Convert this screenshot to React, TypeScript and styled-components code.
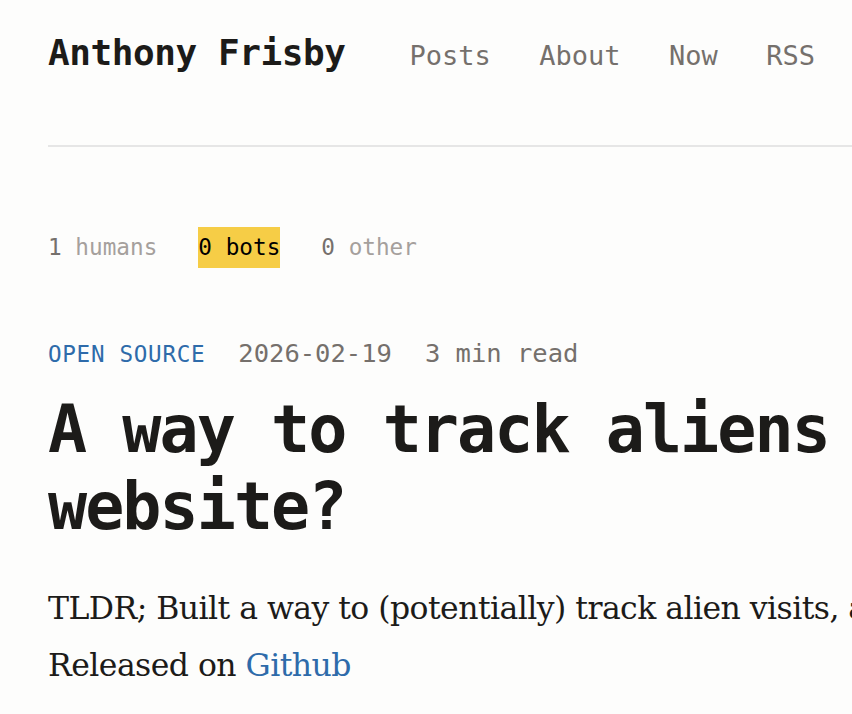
import React from 'react';
import styled, { createGlobalStyle } from 'styled-components';

const MONO = '"DejaVu Sans Mono", "Liberation Mono", monospace';
const SERIF = '"DejaVu Serif", "Liberation Serif", serif';

const colors = {
  bg: '#fdfdfc',
  ink: '#1c1b19',
  muted: '#75706c',
  faint: '#a5a09c',
  rule: '#e6e6e6',
  blue: '#2e6baa',
  highlight: '#f6cd46',
};

const GlobalStyle = createGlobalStyle`
  html, body {
    margin: 0;
    padding: 0;
    background: ${colors.bg};
    overflow: hidden;
  }
  body {
    font-family: ${MONO};
    color: ${colors.ink};
  }
`;

// the page is wider than the window, so the title and intro run off the right edge
const Page = styled.div`
  width: 1100px;
  padding: 0 48px;
`;

const Header = styled.header`
  display: flex;
  align-items: baseline;
  gap: 64px;
  padding: 31px 0 70px;
  border-bottom: 2px solid ${colors.rule};
`;

const SiteName = styled.a`
  font-size: 36px;
  line-height: 44px;
  font-weight: 700;
  letter-spacing: -0.012em;
  color: ${colors.ink};
  text-decoration: none;
`;

const Nav = styled.nav`
  display: flex;
  gap: 48.5px;
`;

const NavLink = styled.a`
  font-size: 27px;
  color: ${colors.muted};
  text-decoration: none;
`;

const Stats = styled.div`
  display: flex;
  gap: 41px;
  margin-top: 80px;
`;

const Stat = styled.span<{ $active?: boolean }>`
  font-size: 22.7px;
  line-height: 41px;
  background: ${(p) => (p.$active ? colors.highlight : 'transparent')};
  color: ${(p) => (p.$active ? '#000' : colors.faint)};
`;

const StatCount = styled.span<{ $active?: boolean }>`
  color: ${(p) => (p.$active ? '#000' : colors.muted)};
`;

const Meta = styled.div`
  display: flex;
  align-items: baseline;
  gap: 33px;
  margin-top: 66px;
  font-size: 25.5px;
  line-height: 39px;
  color: ${colors.muted};
`;

const Category = styled.a`
  font-size: 22.6px;
  letter-spacing: 0.7px;
  text-transform: uppercase;
  color: ${colors.blue};
  text-decoration: none;
`;

const Title = styled.h1`
  margin: 18px 0 0;
  font-size: 65px;
  line-height: 76.6px;
  font-weight: 700;
  letter-spacing: -0.03em;
  color: ${colors.ink};
`;

const Body = styled.p`
  margin: 35px 0 0;
  font-family: ${SERIF};
  font-size: 31.5px;
  line-height: 56.7px;
  letter-spacing: -0.55px;
  color: ${colors.ink};
`;

const Link = styled.a`
  color: ${colors.blue};
  text-decoration: none;
`;

const stats = [
  { count: 1, label: 'humans' },
  { count: 0, label: 'bots', active: true },
  { count: 0, label: 'other' },
];

export default function App() {
  return (
    <>
      <GlobalStyle />
      <Page>
        <Header>
          <SiteName href="#">Anthony Frisby</SiteName>
          <Nav>
            <NavLink href="#">Posts</NavLink>
            <NavLink href="#">About</NavLink>
            <NavLink href="#">Now</NavLink>
            <NavLink href="#">RSS</NavLink>
          </Nav>
        </Header>

        <Stats>
          {stats.map((s) => (
            <Stat key={s.label} $active={s.active}>
              <StatCount $active={s.active}>{s.count}</StatCount> {s.label}
            </Stat>
          ))}
        </Stats>

        <article>
          <Meta>
            <Category href="#">Open Source</Category>
            <span>2026-02-19</span>
            <span>3 min read</span>
          </Meta>
          <Title>A way to track aliens on your website?</Title>
          <Body>
            TLDR; Built a way to (potentially) track alien visits, and bots too.
            <br />
            Released on <Link href="#">Github</Link>
          </Body>
        </article>
      </Page>
    </>
  );
}
